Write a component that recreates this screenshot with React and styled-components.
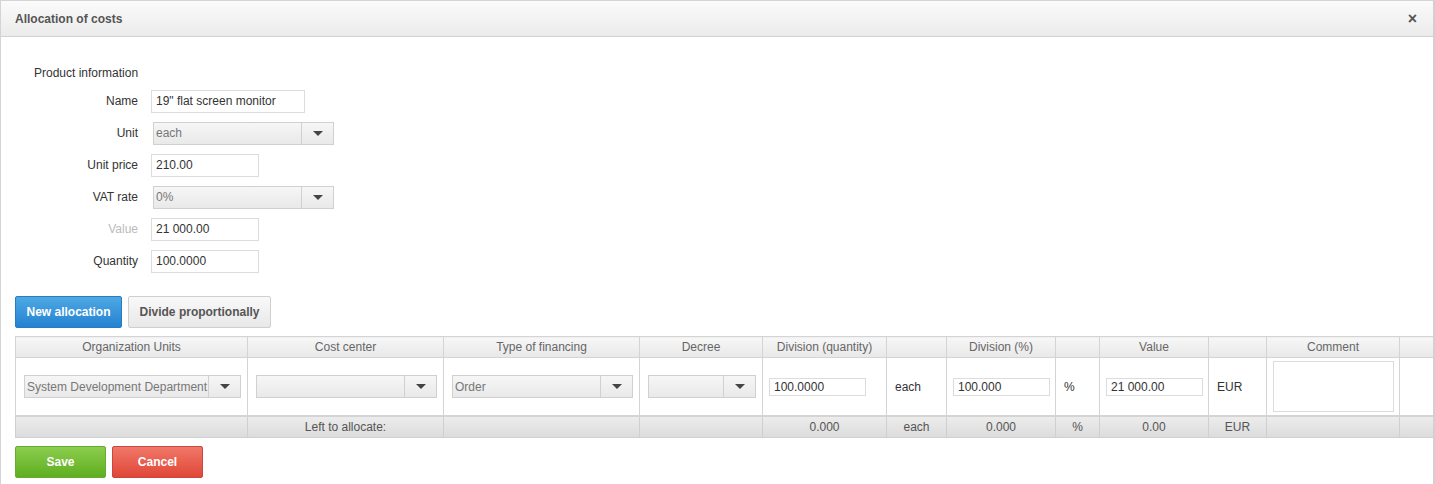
import React from 'react';
import styled, { createGlobalStyle } from 'styled-components';

const GlobalStyle = createGlobalStyle`
  html, body {
    margin: 0;
    padding: 0;
    background: #ffffff;
    font-family: 'Liberation Sans', Arial, sans-serif;
    font-size: 12px;
    color: #333;
  }
`;

const Dialog = styled.div`
  width: 1435px;
  min-height: 484px;
  border-left: 1px solid #d4d4d4;
  border-right: 2px solid #d0d0d0;
  border-top: 1px solid #d4d4d4;
  box-sizing: border-box;
  overflow: hidden;
`;

const Header = styled.div`
  height: 35px;
  display: flex;
  align-items: center;
  justify-content: space-between;
  padding: 0 16px 0 14px;
  background: linear-gradient(to bottom, #fbfbfb, #ebebeb);
  border-bottom: 1px solid #d2d2d2;
`;

const Title = styled.h1`
  margin: 0;
  font-size: 12px;
  font-weight: bold;
  color: #555;
`;

const Close = styled.span`
  font-size: 16px;
  font-weight: bold;
  color: #555;
  line-height: 1;
`;

const Body = styled.div`
  padding: 29px 0 0 0;
`;

const SectionTitle = styled.div`
  padding-left: 33px;
  line-height: 14px;
  color: #333;
  margin-bottom: 5px;
`;

const FormGrid = styled.div`
  display: grid;
  grid-template-columns: 137px auto;
  grid-auto-rows: 32px;
  column-gap: 13px;
  align-items: center;
`;

const Label = styled.label`
  text-align: right;
  color: ${p => (p.$muted ? '#bbb' : '#333')};
`;

const TextInput = styled.input`
  box-sizing: border-box;
  width: ${p => p.$w}px;
  height: ${p => p.$h || 23}px;
  border: 1px solid #dcdcdc;
  padding: 0 4px;
  font-family: inherit;
  font-size: 12px;
  color: #333;
  background: #fff;
  outline: none;
`;

const SelectBox = styled.div`
  box-sizing: border-box;
  display: flex;
  width: ${p => p.$w}px;
  height: 23px;
  margin-left: ${p => p.$ml || 0}px;
  border: 1px solid #d0d0d0;
  background: linear-gradient(to bottom, #f6f6f6, #e9e9e9);
  color: #777;
`;

const SelectText = styled.span`
  flex: 1;
  display: flex;
  align-items: center;
  padding-left: 2px;
  white-space: nowrap;
  overflow: hidden;
`;

const SelectArrow = styled.span`
  width: ${p => p.$aw || 30}px;
  border-left: 1px solid #d0d0d0;
  display: flex;
  align-items: center;
  justify-content: center;
  &::after {
    content: '';
    border-left: 5px solid transparent;
    border-right: 5px solid transparent;
    border-top: 5px solid #444;
  }
`;

const Actions = styled.div`
  display: flex;
  gap: 6px;
  padding-left: 14px;
  margin-top: ${p => p.$mt}px;
`;

const Button = styled.button`
  box-sizing: border-box;
  height: 32px;
  width: ${p => (p.$w ? `${p.$w}px` : 'auto')};
  padding: 0 10.5px;
  font-family: inherit;
  font-size: 12px;
  font-weight: bold;
  border-radius: 2px;
  cursor: pointer;
  ${p =>
    p.$variant === 'primary'
      ? `background: linear-gradient(to bottom, #4ea8e4, #2382d2);
         border: 1px solid #2a7cc0; color: #fff;`
      : p.$variant === 'success'
      ? `background: linear-gradient(to bottom, #8ccd4e, #5fae20);
         border: 1px solid #66ac30; color: #fff;`
      : p.$variant === 'danger'
      ? `background: linear-gradient(to bottom, #f07768, #e04738);
         border: 1px solid #c9473c; color: #fff;`
      : `background: linear-gradient(to bottom, #f9f9f9, #e8e8e8);
         border: 1px solid #cfcfcf; color: #555;`}
`;

const Table = styled.table`
  margin: 8px 0 0 14px;
  width: 1418px;
  border-collapse: collapse;
  table-layout: fixed;
  border: 1px solid #cfcfcf;
`;

const Th = styled.th`
  height: 20px;
  padding: 0;
  font-weight: normal;
  color: #666;
  text-align: center;
  border: 1px solid #d4d4d4;
  background: linear-gradient(to bottom, #f7f7f7, #e8e8e8);
`;

const Td = styled.td`
  height: 57px;
  padding: 0 0 0 ${p => p.$pl ?? 8}px;
  border: 1px solid #d4d4d4;
  color: #333;
  vertical-align: middle;
  overflow: hidden;
`;

const FootCell = styled.td`
  height: 20px;
  padding: 0;
  text-align: center;
  color: #555;
  border: 1px solid #cfcfcf;
  border-top: 2px solid #d4d4d4;
  background: linear-gradient(to bottom, #ececec, #dcdcdc);
`;

const Comment = styled.textarea`
  box-sizing: border-box;
  display: block;
  width: 121px;
  height: 51px;
  border: 1px solid #dcdcdc;
  resize: none;
  outline: none;
`;

const Select = ({ value, w, aw, ml }) => (
  <SelectBox $w={w} $ml={ml}>
    <SelectText>{value}</SelectText>
    <SelectArrow $aw={aw} />
  </SelectBox>
);

const columns = [
  { w: 232, t: 'Organization Units' },
  { w: 196, t: 'Cost center' },
  { w: 196, t: 'Type of financing' },
  { w: 123, t: 'Decree' },
  { w: 124, t: 'Division (quantity)' },
  { w: 60, t: '' },
  { w: 109, t: 'Division (%)' },
  { w: 44, t: '' },
  { w: 109, t: 'Value' },
  { w: 58, t: '' },
  { w: 133, t: 'Comment' },
  { w: 34, t: '' },
];

const footer = ['', 'Left to allocate:', '', '', '0.000', 'each', '0.000', '%', '0.00', 'EUR', '', ''];

const App = () => (
  <>
    <GlobalStyle />
    <Dialog>
      <Header>
        <Title>Allocation of costs</Title>
        <Close>×</Close>
      </Header>
      <Body>
        <SectionTitle>Product information</SectionTitle>
        <FormGrid>
          <Label>Name</Label>
          <TextInput $w={154} defaultValue={'19" flat screen monitor'} />
          <Label>Unit</Label>
          <Select value="each" w={181} aw={31} ml={2} />
          <Label>Unit price</Label>
          <TextInput $w={108} defaultValue="210.00" />
          <Label>VAT rate</Label>
          <Select value="0%" w={181} aw={31} ml={2} />
          <Label $muted>Value</Label>
          <TextInput $w={108} defaultValue="21 000.00" />
          <Label>Quantity</Label>
          <TextInput $w={108} defaultValue="100.0000" />
        </FormGrid>

        <Actions $mt={19}>
          <Button $variant="primary">New allocation</Button>
          <Button>Divide proportionally</Button>
        </Actions>

        <Table>
          <colgroup>
            {columns.map((c, i) => (
              <col key={i} style={{ width: c.w }} />
            ))}
          </colgroup>
          <thead>
            <tr>
              {columns.map((c, i) => (
                <Th key={i}>{c.t}</Th>
              ))}
            </tr>
          </thead>
          <tbody>
            <tr>
              <Td>
                <Select value="System Development Department" w={217} aw={31} />
              </Td>
              <Td>
                <Select value="" w={181} aw={31} />
              </Td>
              <Td>
                <Select value="Order" w={181} aw={31} />
              </Td>
              <Td>
                <Select value="" w={108} aw={31} />
              </Td>
              <Td $pl={6}>
                <TextInput $w={97} $h={18} defaultValue="100.0000" />
              </Td>
              <Td>each</Td>
              <Td $pl={6}>
                <TextInput $w={97} $h={18} defaultValue="100.000" />
              </Td>
              <Td>%</Td>
              <Td $pl={6}>
                <TextInput $w={97} $h={18} defaultValue="21 000.00" />
              </Td>
              <Td>EUR</Td>
              <Td $pl={6}>
                <Comment />
              </Td>
              <Td />
            </tr>
            <tr>
              {footer.map((t, i) => (
                <FootCell key={i}>{t}</FootCell>
              ))}
            </tr>
          </tbody>
        </Table>

        <Actions $mt={8}>
          <Button $variant="success" $w={91}>Save</Button>
          <Button $variant="danger" $w={91}>Cancel</Button>
        </Actions>
      </Body>
    </Dialog>
  </>
);

export default App;
